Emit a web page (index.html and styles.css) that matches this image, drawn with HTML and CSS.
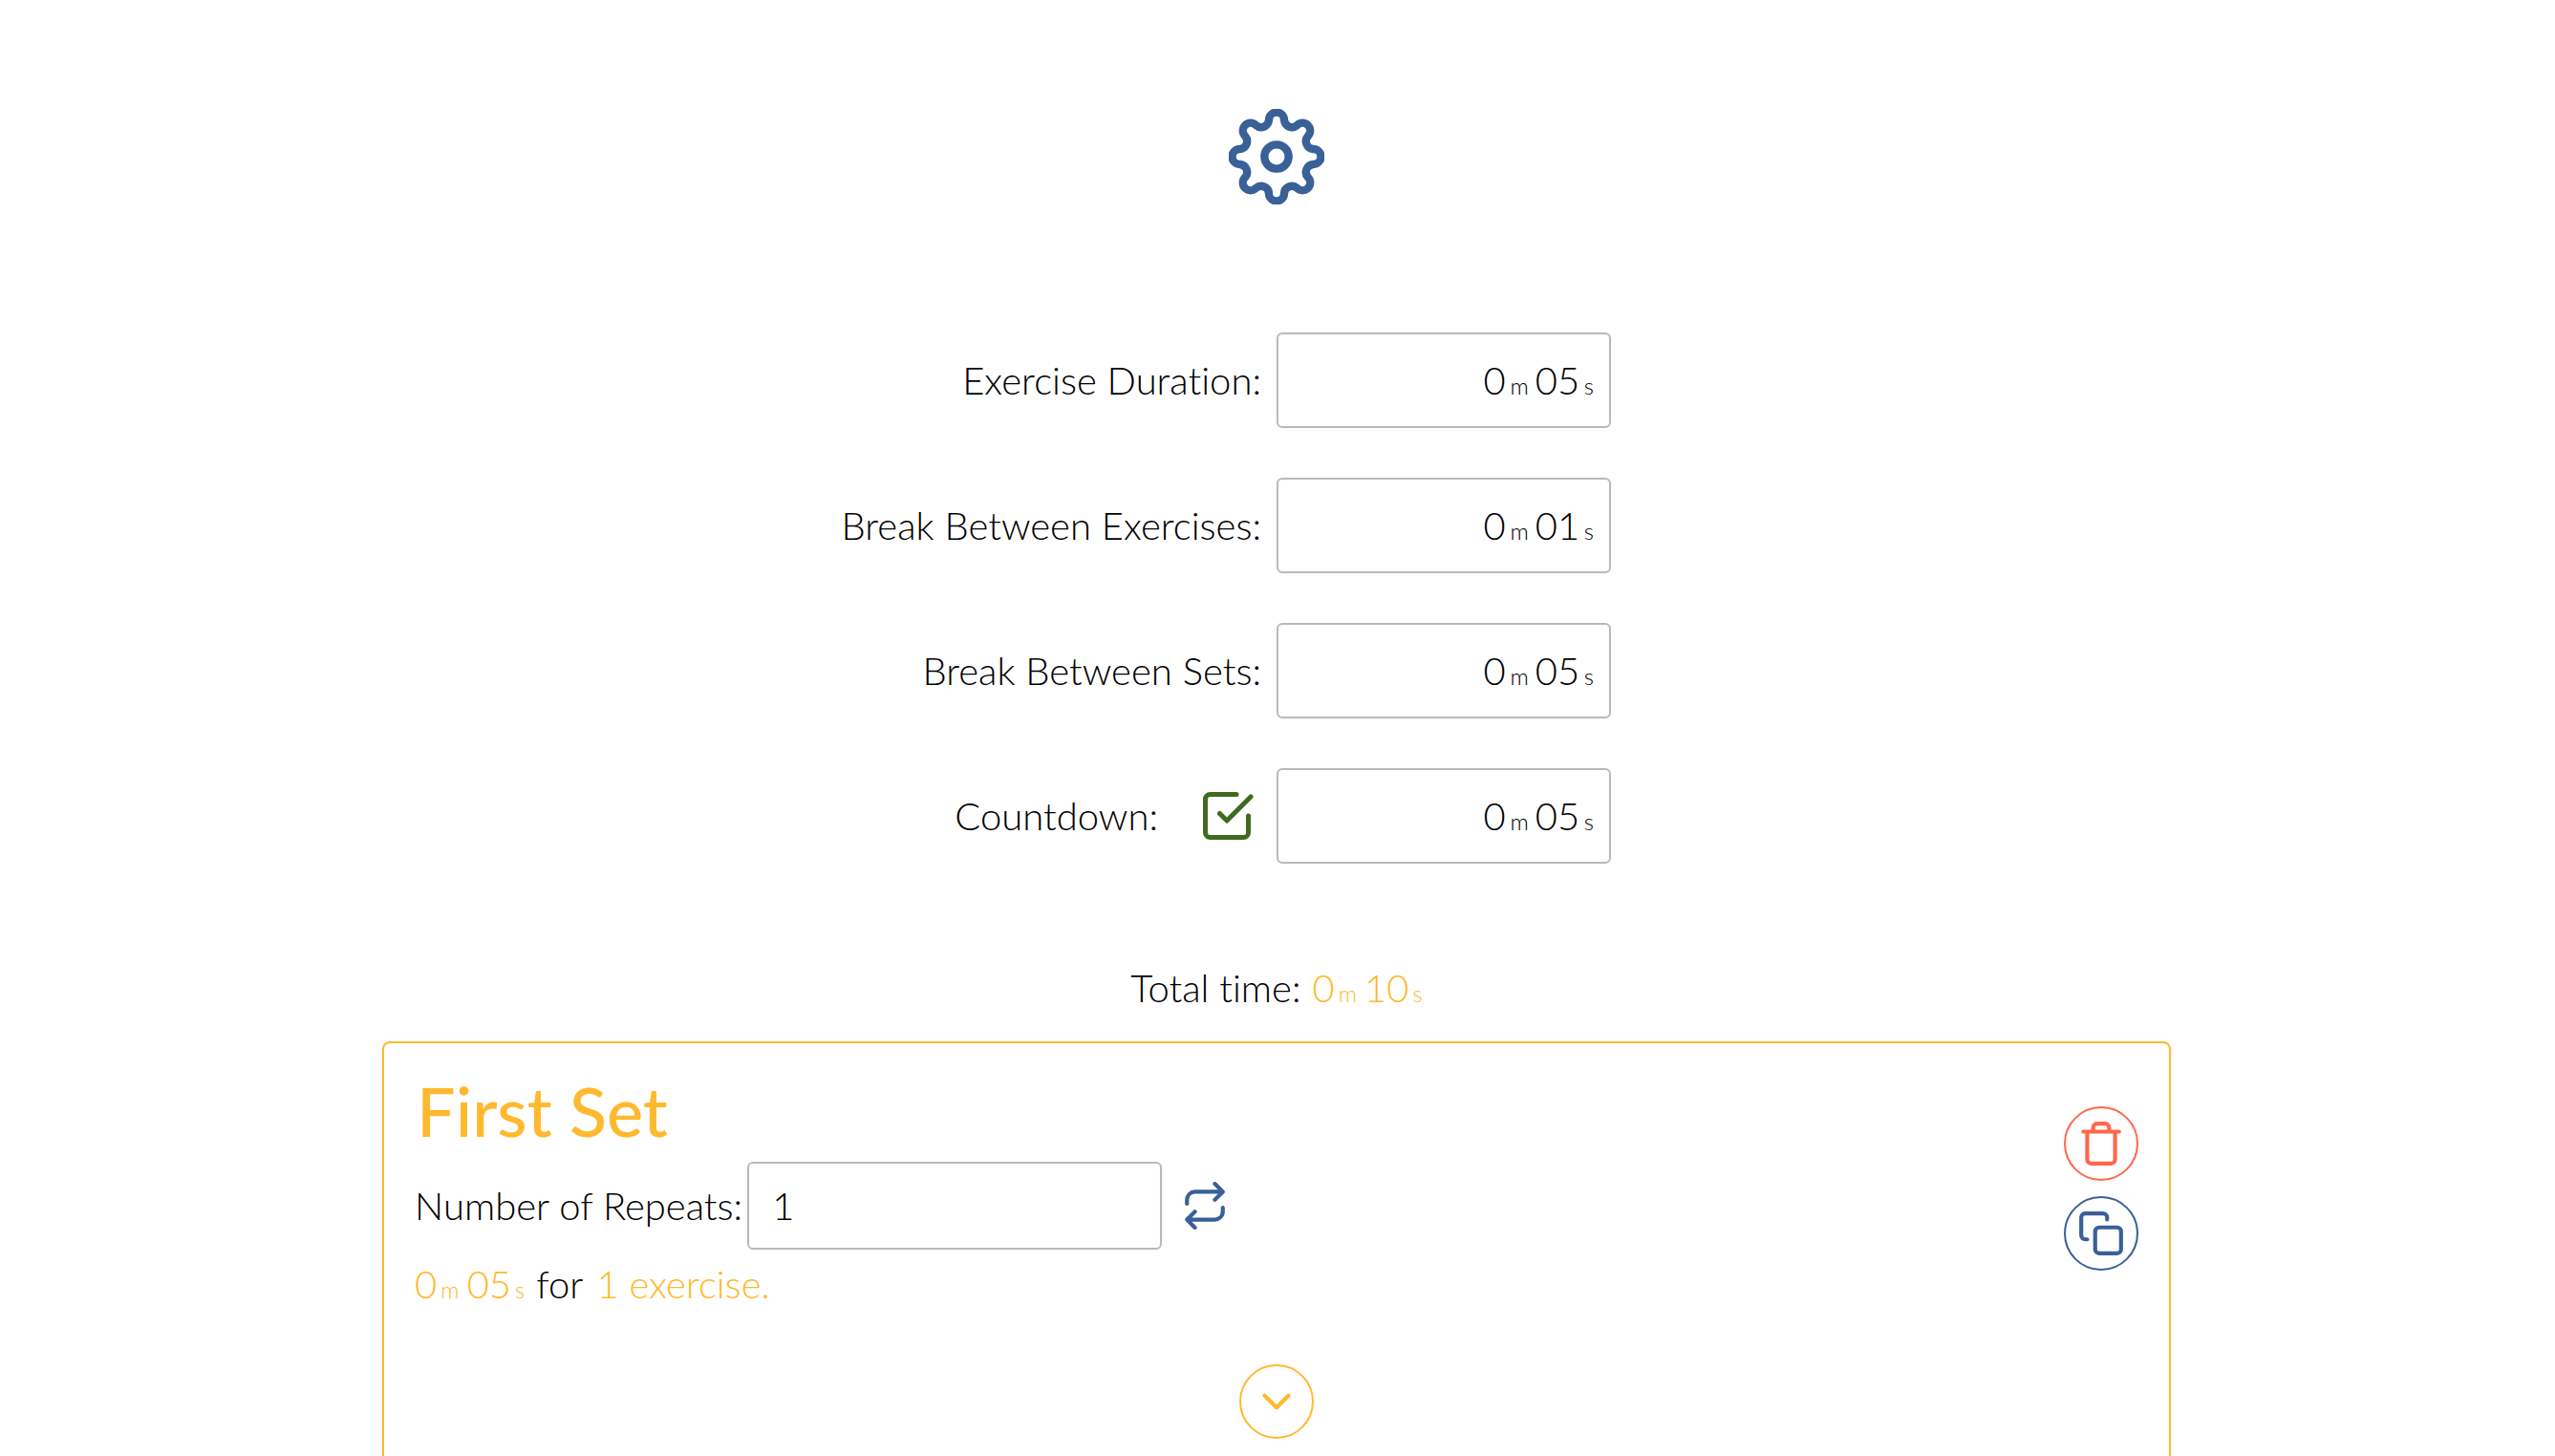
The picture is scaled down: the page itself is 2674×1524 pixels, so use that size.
FILE: index.html
```html
<!DOCTYPE html>
<html lang="en">
<head>
<meta charset="utf-8">
<meta name="viewport" content="width=device-width, initial-scale=1">
<title>Exercise Timer</title>
<link rel="stylesheet" href="styles.css">
</head>
<body>
<main class="page">
  <button class="settings" type="button" aria-label="Settings">
    <svg viewBox="-150 -150 300 300" class="settings-icon" aria-hidden="true">
      <path d="M-24-115.400A24 24 0 0 1 24-115.400A24.500 24.500 0 0 0 64.600-98.600A24 24 0 0 1 98.600-64.600A24.500 24.500 0 0 0 115.400-24A24 24 0 0 1 115.400 24A24.500 24.500 0 0 0 98.600 64.600A24 24 0 0 1 64.600 98.600A24.500 24.500 0 0 0 24 115.400A24 24 0 0 1-24 115.400A24.500 24.500 0 0 0-64.600 98.600A24 24 0 0 1-98.600 64.600A24.500 24.500 0 0 0-115.400 24A24 24 0 0 1-115.400-24A24.500 24.500 0 0 0-98.600-64.600A24 24 0 0 1-64.600-98.600A24.500 24.500 0 0 0-24-115.400Z"/>
      <circle r="38"/>
    </svg>
  </button>

  <form class="durations">
    <div class="row">
      <label class="row-label" for="exercise-m">Exercise Duration:</label>
      <div class="time-box">
        <input class="minutes" id="exercise-m" value="0" inputmode="numeric"><span class="unit">m</span>
        <input class="seconds" value="05" aria-label="Exercise seconds" inputmode="numeric"><span class="unit">s</span>
      </div>
    </div>
    <div class="row">
      <label class="row-label" for="break-m">Break Between Exercises:</label>
      <div class="time-box">
        <input class="minutes" id="break-m" value="0" inputmode="numeric"><span class="unit">m</span>
        <input class="seconds" value="01" aria-label="Break seconds" inputmode="numeric"><span class="unit">s</span>
      </div>
    </div>
    <div class="row">
      <label class="row-label" for="sets-m">Break Between Sets:</label>
      <div class="time-box">
        <input class="minutes" id="sets-m" value="0" inputmode="numeric"><span class="unit">m</span>
        <input class="seconds" value="05" aria-label="Set break seconds" inputmode="numeric"><span class="unit">s</span>
      </div>
    </div>
    <div class="row">
      <div class="row-label toggle">
        <label for="countdown-on">Countdown:</label>
        <span class="check">
          <input type="checkbox" id="countdown-on" class="check-input" checked>
          <svg viewBox="0 0 24 24" class="check-icon" aria-hidden="true"><path d="M9 11l3 3L22 4M21 12v7a2 2 0 0 1-2 2H5a2 2 0 0 1-2-2V5a2 2 0 0 1 2-2h11"/></svg>
        </span>
      </div>
      <div class="time-box">
        <input class="minutes" value="0" aria-label="Countdown minutes" inputmode="numeric"><span class="unit">m</span>
        <input class="seconds" value="05" aria-label="Countdown seconds" inputmode="numeric"><span class="unit">s</span>
      </div>
    </div>
  </form>

  <p class="total">
    <span>Total time:</span>
    <span class="time"><span>0</span><span class="unit">m</span><span class="time-seconds">10</span><span class="unit">s</span></span>
  </p>

  <section class="set">
    <div class="set-top">
      <div class="set-info">
        <h2 class="set-title">First Set</h2>
        <div class="repeats">
          <label for="repeats">Number of Repeats:</label>
          <input class="repeats-input" id="repeats" value="1" inputmode="numeric">
          <svg viewBox="0 0 24 24" class="icon repeat-icon" aria-hidden="true"><path d="M17 1l4 4-4 4M3 11V9a4 4 0 0 1 4-4h14M7 23l-4-4 4-4M21 13v2a4 4 0 0 1-4 4H3"/></svg>
        </div>
        <p class="summary">
          <span class="time"><span>0</span><span class="unit">m</span><span class="time-seconds">05</span><span class="unit">s</span></span>
          <span class="summary-for">for</span>
          <span class="accent">1 exercise.</span>
        </p>
      </div>
      <div class="set-actions">
        <button class="round danger" type="button" aria-label="Delete set">
          <svg viewBox="0 0 24 24" class="icon" aria-hidden="true"><path d="M3 6h18M19 6v14a2 2 0 0 1-2 2H7a2 2 0 0 1-2-2V6m3 0V4a2 2 0 0 1 2-2h4a2 2 0 0 1 2 2v2"/></svg>
        </button>
        <button class="round primary" type="button" aria-label="Copy set">
          <svg viewBox="0 0 24 24" class="icon" aria-hidden="true"><rect x="9" y="9" width="13" height="13" rx="2"/><path d="M5 15H4a2 2 0 0 1-2-2V4a2 2 0 0 1 2-2h9a2 2 0 0 1 2 2v1"/></svg>
        </button>
      </div>
    </div>
    <button class="round accent expand" type="button" aria-label="Show exercises">
      <svg viewBox="0 0 24 24" class="icon" aria-hidden="true"><path d="M6 9l6 6 6-6"/></svg>
    </button>
  </section>
</main>
</body>
</html>
```
FILE: styles.css
```css
:root {
  --yellow: #ffb92e;
  --blue: #396097;
  --red: #ff674a;
  --green: #3f6a21;
  --line: #babab5;
}

* {
  box-sizing: border-box;
}

body {
  margin: 0;
  overflow: hidden;
  background: #fff;
  color: #000;
  font: 300 40px/48px Lato, sans-serif;
  font-variant-ligatures: none;
}

button,
input {
  margin: 0;
  padding: 0;
  border: 0;
  background: none;
  color: inherit;
  font: inherit;
}

p,
h2 {
  margin: 0;
}

svg {
  display: block;
  fill: none;
  stroke: currentColor;
  stroke-width: 2;
  stroke-linecap: round;
  stroke-linejoin: round;
}

.page {
  display: flex;
  flex-direction: column;
  align-items: center;
  padding: 114px 2px 0 0;
}

.settings {
  color: var(--blue);
}

.settings-icon {
  width: 100px;
  height: 100px;
  stroke-width: 25;
}

.durations {
  display: grid;
  gap: 52px;
  width: 100%;
  margin-top: 134px;
}

.row {
  display: grid;
  grid-template-columns: 1fr 1fr;
  align-items: center;
}

.row-label {
  padding-right: 16px;
  text-align: right;
}

.toggle {
  display: flex;
  justify-content: flex-end;
  align-items: center;
  gap: 42px;
  padding-right: 22px;
}

.check {
  position: relative;
  color: var(--green);
}

.check-input {
  position: absolute;
  inset: 0;
  width: 100%;
  height: 100%;
  opacity: 0;
}

.check-icon {
  width: 60px;
  height: 60px;
}

.time-box {
  display: flex;
  justify-content: flex-end;
  align-items: baseline;
  width: 350px;
  height: 100px;
  padding: 24px 16px;
  border: 2px solid var(--line);
  border-radius: 6px;
}

.minutes {
  width: 24px;
}

.seconds {
  width: 47px;
  margin-left: 7px;
}

.unit {
  margin-left: 4px;
  font-size: 24px;
  line-height: 24px;
}

.total {
  display: flex;
  gap: 12px;
  margin-top: 106px;
}

.time {
  color: var(--yellow);
}

.time-seconds {
  margin-left: 8px;
}

.set {
  display: flex;
  flex-direction: column;
  width: 70vw;
  margin-top: 32px;
  padding: 30px 32px;
  border: 2px solid var(--yellow);
  border-radius: 8px;
}

.set-top {
  display: flex;
  justify-content: space-between;
}

.set-title {
  padding-left: 2px;
  color: var(--yellow);
  font-size: 72px;
  font-weight: 500;
  line-height: 80px;
}

.repeats {
  display: flex;
  align-items: center;
  margin-top: 14px;
}

.repeats-input {
  width: 434px;
  height: 92px;
  margin: 0 20px 0 5px;
  padding: 0 24px;
  border: 2px solid var(--line);
  border-radius: 6px;
}

.icon {
  width: 50px;
  height: 50px;
}

.repeat-icon {
  color: var(--blue);
}

.summary {
  display: flex;
  margin-top: 12px;
}

.summary-for {
  margin: 0 14px 0 12px;
}

.accent {
  color: var(--yellow);
}

.set-actions {
  display: grid;
  align-content: start;
  gap: 16px;
  padding-top: 36px;
}

.round {
  display: grid;
  place-items: center;
  width: 78px;
  height: 78px;
  border: 2px solid currentColor;
  border-radius: 50%;
}

.danger {
  color: var(--red);
}

.primary {
  color: var(--blue);
}

.expand {
  align-self: center;
  margin-top: 60px;
}
```
